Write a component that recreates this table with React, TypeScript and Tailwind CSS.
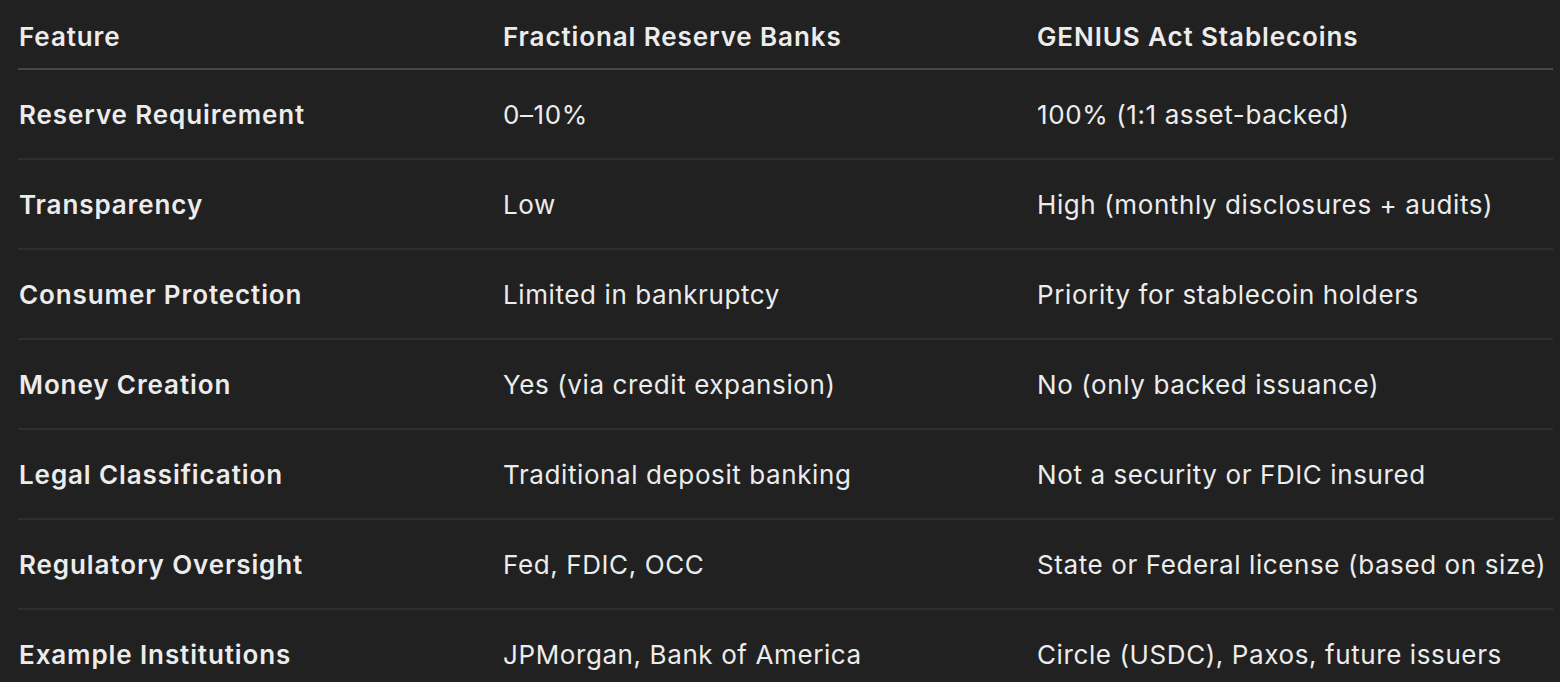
const rows = [
  ["Reserve Requirement", "0–10%", "100% (1:1 asset-backed)"],
  ["Transparency", "Low", "High (monthly disclosures + audits)"],
  ["Consumer Protection", "Limited in bankruptcy", "Priority for stablecoin holders"],
  ["Money Creation", "Yes (via credit expansion)", "No (only backed issuance)"],
  ["Legal Classification", "Traditional deposit banking", "Not a security or FDIC insured"],
  ["Regulatory Oversight", "Fed, FDIC, OCC", "State or Federal license (based on size)"],
  ["Example Institutions", "JPMorgan, Bank of America", "Circle (USDC), Paxos, future issuers"],
];

export default function App() {
  return (
    <div className="h-[682px] w-full overflow-hidden bg-[#212121] pl-[18px] font-['Inter',sans-serif] text-[26px] tracking-[0.6px] text-[#ececec] antialiased">
      <div className="w-[1535px]">
        <div className="grid grid-cols-[485px_534px_1fr] border-b-2 border-[#474747] pt-[21px] pb-[15px] leading-[32px] font-semibold tracking-[0.9px]">
          <div className="pl-px">Feature</div>
          <div>Fractional Reserve Banks</div>
          <div>GENIUS Act Stablecoins</div>
        </div>
        {rows.map((r) => (
          <div
            key={r[0]}
            className="grid h-[90px] grid-cols-[485px_534px_1fr] items-center border-b-2 border-[#2f2f2f] pt-[2px] leading-[32px]"
          >
            <div className="pl-px font-semibold tracking-[0.9px]">{r[0]}</div>
            <div>{r[1]}</div>
            <div className="whitespace-nowrap">{r[2]}</div>
          </div>
        ))}
      </div>
    </div>
  );
}
